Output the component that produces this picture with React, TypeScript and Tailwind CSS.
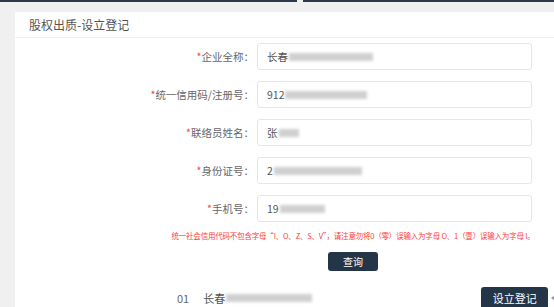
import React from 'react';

const FONT = { fontFamily: '"Noto Sans CJK SC", "Noto Sans", sans-serif' };

const ROWS = [
  { label: '企业全称', prefix: '长春', bar: 84 },
  { label: '统一信用码/注册号', prefix: '912', bar: 82 },
  { label: '联络员姓名', prefix: '张', bar: 20 },
  { label: '身份证号', prefix: '2', bar: 88 },
  { label: '手机号', prefix: '19', bar: 45 },
];

const Blur = ({ w }: { w: number }) => (
  <span
    className="inline-block h-[8px] bg-[#c4c4c4] blur-[1.5px] opacity-80 ml-[1px]"
    style={{ width: w }}
  />
);

export default function App() {
  return (
    <div className="w-[554px] h-[307px] bg-[#f0f0f0] overflow-hidden relative" style={FONT}>
      <div className="flex h-[2px]">
        <div className="w-[297px] bg-[#2e3a4c]" />
        <div className="w-[6px]" />
        <div className="flex-1 bg-[#2e3a4c]" />
      </div>
      <div className="pt-[10px] pl-[15px]">
        <div className="w-[676px] bg-white">
          <div className="h-[26px] flex items-center px-[14px] text-[12px] text-[#555] border-b border-[#efefef]">
            股权出质-设立登记
          </div>
          <div className="pt-[5px] flex flex-col gap-[11px]">
            {ROWS.map((r) => (
              <div key={r.label} className="flex items-center">
                <div className="w-[242px] text-right pr-[3px] text-[10.5px] text-[#666] whitespace-nowrap">
                  <span className="text-[#f44]">*</span>
                  {r.label}：
                </div>
                <div className="w-[275px] h-[27px] border border-[#e6e6e6] rounded-[3px] flex items-center pl-[9px] text-[10.5px] text-[#555]">
                  {r.prefix}
                  <Blur w={r.bar} />
                </div>
              </div>
            ))}
          </div>
          <div className="mt-[8px] text-center text-[7.5px] tracking-[-0.2px] leading-[12px] text-[#ff3b3b] whitespace-nowrap">
            统一社会信用代码不包含字母“I、O、Z、S、V”，请注意勿将0（零）误输入为字母 O、1（壹）误输入为字母 I。
          </div>
          <div className="mt-[10px] flex justify-center">
            <button className="w-[50px] h-[19px] rounded-[3px] bg-[#253548] text-white text-[10px] flex items-center justify-center">
              查询
            </button>
          </div>
          <div className="mt-[16px] flex items-center h-[22px]">
            <span className="ml-[162px] text-[11px] text-[#666]">01</span>
            <span className="ml-[14px] text-[11px] text-[#555] flex items-center">
              长春
              <Blur w={86} />
            </span>
            <button className="ml-[169px] w-[67px] h-[22px] rounded-[3px] bg-[#253548] text-white text-[11px] flex items-center justify-center">
              设立登记
            </button>
            <span className="ml-[3px] w-0 h-0 border-y-[3px] border-y-transparent border-r-[4px] border-r-[#999]" />
          </div>
        </div>
      </div>
    </div>
  );
}
